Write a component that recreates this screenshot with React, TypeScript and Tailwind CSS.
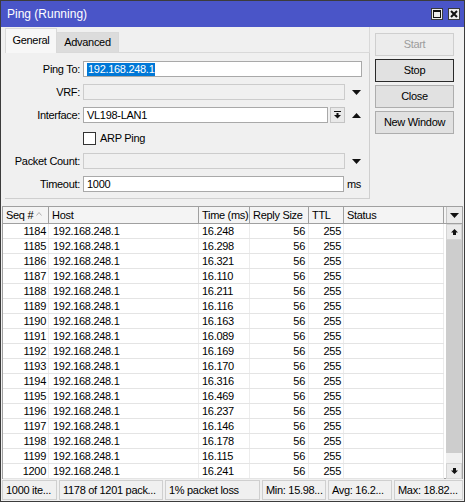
import React from "react";

const pings: [number, string][] = [
  [1184, "16.248"],
  [1185, "16.298"],
  [1186, "16.321"],
  [1187, "16.110"],
  [1188, "16.211"],
  [1189, "16.116"],
  [1190, "16.163"],
  [1191, "16.089"],
  [1192, "16.169"],
  [1193, "16.170"],
  [1194, "16.316"],
  [1195, "16.469"],
  [1196, "16.237"],
  [1197, "16.146"],
  [1198, "16.178"],
  [1199, "16.115"],
  [1200, "16.241"],
];

const status = [
  { text: "1000 ite...", w: "w-[55px]" },
  { text: "1178 of 1201 pack...", w: "w-[104px]" },
  { text: "1% packet loss", w: "w-[95px]" },
  { text: "Min: 15.98...", w: "w-[64px]" },
  { text: "Avg: 16.2...", w: "w-[64px]" },
  { text: "Max: 18.82...", w: "flex-1" },
];

function Caret({ up = false }: { up?: boolean }) {
  return (
    <svg width="9" height="5" viewBox="0 0 9 5" className="shrink-0">
      <polygon points={up ? "0,5 9,5 4.5,0" : "0,0 9,0 4.5,5"} fill="#111" />
    </svg>
  );
}

function StemArrow({ up = false }: { up?: boolean }) {
  return (
    <svg width="7" height="6" viewBox="0 0 7 6">
      <polygon
        points={up ? "3.5,0 7,3.5 5,3.5 5,6 2,6 2,3.5 0,3.5" : "2,0 5,0 5,2.5 7,2.5 3.5,6 0,2.5 2,2.5"}
        fill="#111"
      />
    </svg>
  );
}

function Field({ label, children }: { label: string; children: React.ReactNode }) {
  return (
    <div className="flex h-[16px] items-center">
      <span className="w-[75px] shrink-0 text-right">{label}</span>
      <div className="ml-[3px] flex flex-1 items-center">{children}</div>
    </div>
  );
}

function Button({ label, variant }: { label: string; variant?: "disabled" | "default" }) {
  const cls =
    variant === "disabled"
      ? "border-[#cfcfcf] bg-[#ececec] text-[#9c9c9c]"
      : variant === "default"
        ? "border-[#2a2a2a] bg-[#e1e1e1]"
        : "border-[#adadad] bg-[#e1e1e1]";
  return (
    <div className={`flex h-[23px] w-[79px] items-center justify-center border ${cls}`}>{label}</div>
  );
}

export default function App() {
  return (
    <div className="flex h-[502px] w-[465px] flex-col overflow-hidden whitespace-nowrap border border-[#3c3c3c] bg-[#f0f0f0] font-['Liberation_Sans',Arial,sans-serif] text-[11px] tracking-[-0.3px] text-black">
      {/* title bar */}
      <div className="flex h-[26px] shrink-0 items-center bg-[#4a55c8] pl-[6px] pr-[4px]">
        <span className="flex-1 text-[12px] tracking-normal text-white">Ping (Running)</span>
        <div className="flex gap-[5px]">
          <div className="flex h-[12px] w-[12px] items-center justify-center border border-[#3a3a3a] bg-[#ececec]">
            <div className="h-[8px] w-[8px] border border-t-2 border-[#111]" />
          </div>
          <div className="flex h-[12px] w-[12px] items-center justify-center border border-[#3a3a3a] bg-[#ececec]">
            <svg width="8" height="8" viewBox="0 0 8 8">
              <path d="M1 1 L7 7 M7 1 L1 7" stroke="#111" strokeWidth="2" />
            </svg>
          </div>
        </div>
      </div>

      {/* form area */}
      <div className="flex shrink-0 pl-[4px]">
        <div className="flex w-[365px] flex-col">
          <div className="flex h-[26px] items-end">
            <div className="flex h-[25px] w-[52px] items-center justify-center border-x border-t border-[#d9d9d9] bg-[#f7f7f7] pb-[1px]">
              General
            </div>
            <div className="flex h-[21px] w-[62px] items-center justify-center border-r border-y border-[#d9d9d9] bg-[#dcdcdc]">
              Advanced
            </div>
            <div className="h-full flex-1 border-b border-r border-[#d9d9d9]" />
          </div>
          <div className="flex flex-col gap-[7px] border-b border-r border-[#cfcfcf] pb-[6px] pr-[7px] pt-[8px]">
            <Field label="Ping To:">
              <div className="flex h-[16px] flex-1 items-center border border-[#a9a9a9] bg-white px-[3px]">
                <span className="bg-[#0078d7] px-px leading-[13px] text-white">192.168.248.1</span>
              </div>
            </Field>
            <Field label="VRF:">
              <div className="h-[16px] w-[262px] border border-[#cccccc] bg-[#f0f0f0]" />
              <div className="ml-[5px] flex w-[12px] justify-center">
                <Caret />
              </div>
            </Field>
            <Field label="Interface:">
              <div className="flex h-[16px] w-[245px] items-center border border-[#a9a9a9] bg-white px-[3px]">
                VL198-LAN1
              </div>
              <div className="ml-[2px] flex h-[16px] w-[15px] items-center justify-center border border-[#c4c4c4] bg-[#e9e9e9]">
                <svg width="7" height="8" viewBox="0 0 7 8">
                  <rect x="0" y="0" width="7" height="1" fill="#111" />
                  <rect x="2.5" y="2" width="2" height="2" fill="#111" />
                  <polygon points="0,4 7,4 3.5,7.5" fill="#111" />
                </svg>
              </div>
              <div className="ml-[5px] flex w-[12px] justify-center">
                <Caret up />
              </div>
            </Field>
            <Field label="">
              <div className="flex items-center">
                <div className="h-[13px] w-[13px] border border-[#333] bg-white" />
                <span className="ml-[4px]">ARP Ping</span>
              </div>
            </Field>
            <Field label="Packet Count:">
              <div className="h-[16px] w-[262px] border border-[#cccccc] bg-[#f0f0f0]" />
              <div className="ml-[5px] flex w-[12px] justify-center">
                <Caret />
              </div>
            </Field>
            <Field label="Timeout:">
              <div className="flex h-[16px] w-[261px] items-center border border-[#a9a9a9] bg-white px-[3px]">
                1000
              </div>
              <span className="ml-[3px]">ms</span>
            </Field>
          </div>
        </div>
        <div className="ml-[5px] flex flex-col gap-[3px] pt-[6px]">
          <Button label="Start" variant="disabled" />
          <Button label="Stop" variant="default" />
          <Button label="Close" />
          <Button label="New Window" />
        </div>
      </div>

      {/* table */}
      <div className="mx-[1px] mt-[7px] flex h-[273px] shrink-0 flex-col border border-[#a0a0a0] bg-white">
        <div className="flex h-[17px] shrink-0 border-b border-[#a0a0a0] bg-[#f4f4f4]">
          <div className="flex w-[46px] items-center border-r border-[#a0a0a0] pl-[3px]">
            Seq #
            <svg width="6" height="4" viewBox="0 0 6 4" className="ml-[3px] mt-[-3px]">
              <path d="M0.5 3.5 L3 0.5 L5.5 3.5" stroke="#b0b0b0" fill="none" />
            </svg>
          </div>
          <div className="flex w-[150px] items-center border-r border-[#a0a0a0] pl-[3px]">Host</div>
          <div className="flex w-[51px] items-center border-r border-[#a0a0a0] pl-[3px]">Time (ms)</div>
          <div className="flex w-[59px] items-center border-r border-[#a0a0a0] pl-[3px]">Reply Size</div>
          <div className="flex w-[35px] items-center border-r border-[#a0a0a0] pl-[3px]">TTL</div>
          <div className="flex w-[100px] items-center border-r border-[#a0a0a0] pl-[3px]">Status</div>
          <div className="flex-1" />
          <div className="flex w-[16px] items-center justify-center border-l border-[#c4c4c4] bg-[#eaeaea]">
            <Caret />
          </div>
        </div>
        <div className="flex flex-1">
          <div className="flex flex-col">
            {pings.map(([seq, time]) => (
              <div key={seq} className="flex h-[15px] border-b border-[#e4e4e4] leading-[14px]">
                <div className="w-[46px] border-r border-[#ececec] pr-[2px] text-right">{seq}</div>
                <div className="w-[150px] border-r border-[#ececec] pl-[4px]">192.168.248.1</div>
                <div className="w-[51px] border-r border-[#ececec] pl-[3px]">{time}</div>
                <div className="w-[59px] border-r border-[#ececec] pr-[3px] text-right">56</div>
                <div className="w-[35px] border-r border-[#ececec] pr-[2px] text-right">255</div>
                <div className="w-[100px] border-r border-[#ececec]" />
              </div>
            ))}
          </div>
          <div className="flex-1" />
          <div className="flex w-[16px] flex-col bg-[#f0f0f0]">
            <div className="flex h-[16px] items-center justify-center border border-[#d4d4d4] bg-[#eaeaea]">
              <StemArrow up />
            </div>
            <div className="flex-1 bg-[#cdcdcd]" />
            <div className="h-[10px]" />
            <div className="flex h-[16px] items-center justify-center border border-[#d4d4d4] bg-[#eaeaea]">
              <StemArrow />
            </div>
          </div>
        </div>
      </div>

      {/* status bar */}
      <div className="mt-px flex h-[20px] shrink-0 gap-[2px] px-[1px]">
        {status.map((s) => (
          <div key={s.text} className={`flex items-center overflow-hidden border border-[#cfcfcf] pl-[3px] ${s.w}`}>
            {s.text}
          </div>
        ))}
      </div>
    </div>
  );
}
